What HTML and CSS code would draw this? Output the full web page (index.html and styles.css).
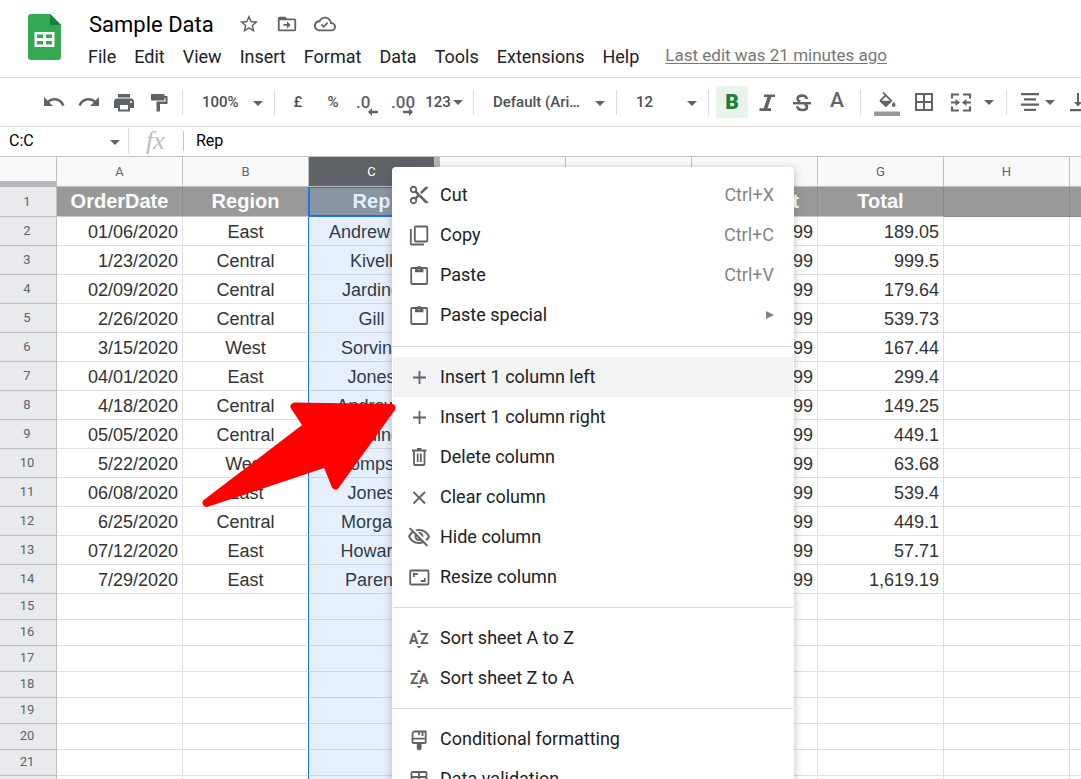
FILE: index.html
```
<!DOCTYPE html>
<html lang="en">
<head>
<meta charset="utf-8">
<title>Sample Data</title>
<link rel="stylesheet" href="styles.css">
</head>
<body>
<header class="header">
  <svg class="logo" viewBox="0 0 34 48" aria-hidden="true">
    <path fill="#34a853" d="M3 1h19l11 11v32a3 3 0 0 1-3 3H3a3 3 0 0 1-3-3V4a3 3 0 0 1 3-3z"/>
    <path fill="#fff" d="M22 0h12v12z"/>
    <path fill="#188038" d="M22 1l11 11H22z"/>
    <path fill="#fff" fill-rule="evenodd" d="M6.500 19h20v15h-20zM9 21.500v3.500h6v-3.500zM18 21.500v3.500h6v-3.500zM9 28v3.500h6V28zM18 28v3.500h6V28z"/>
  </svg>
  <div class="heading">
    <div class="title-row">
      <h1 class="title">Sample Data</h1>
      <button class="plain" aria-label="Star"><svg class="icon" viewBox="0 0 24 24"><path d="M22 9.240l-7.190-.620L12 2 9.190 8.630 2 9.240l5.460 4.730L5.820 21 12 17.270 18.180 21l-1.630-7.030L22 9.240zM12 15.400l-3.760 2.270 1-4.280-3.320-2.880 4.380-.380L12 6.100l1.710 4.040 4.380.380-3.320 2.880 1 4.280L12 15.400z"/></svg></button>
      <button class="plain" aria-label="Move"><svg class="icon" viewBox="0 0 24 24"><path d="M20 6h-8l-2-2H4c-1.100 0-2 .900-2 2v12c0 1.100.900 2 2 2h16c1.100 0 2-.900 2-2V8c0-1.100-.900-2-2-2zm0 12H4V8h16v10zm-8-1l4-4-4-4v3H8v2h4z"/></svg></button>
      <button class="plain" aria-label="Document status"><svg class="icon" viewBox="0 0 24 24"><path d="M19.350 10.040C18.670 6.590 15.640 4 12 4 9.110 4 6.610 5.640 5.360 8.040 2.350 8.360 0 10.900 0 14c0 3.310 2.690 6 6 6h13c2.760 0 5-2.240 5-5 0-2.640-2.050-4.780-4.650-4.960zM19 18H6c-2.210 0-4-1.790-4-4s1.790-4 4-4h.710C7.370 7.690 9.480 6 12 6c3.040 0 5.500 2.460 5.500 5.500v.500H19c1.660 0 3 1.340 3 3s-1.340 3-3 3zM10.600 13.500l-1.800-1.800-1.400 1.400 3.200 3.200 5-5-1.400-1.400z"/></svg></button>
    </div>
    <nav class="menubar">
      <button class="menu">File</button><button class="menu">Edit</button><button class="menu">View</button><button class="menu">Insert</button><button class="menu">Format</button><button class="menu">Data</button><button class="menu">Tools</button><button class="menu">Extensions</button><button class="menu">Help</button>
      <a class="last-edit" href="#">Last edit was 21 minutes ago</a>
    </nav>
  </div>
</header>

<div class="toolbar" role="toolbar">
  <button class="tool" aria-label="Undo"><svg class="icon24" viewBox="0 0 24 24"><path d="M12.500 8c-2.650 0-5.050.990-6.900 2.600L2 7v9h9l-3.620-3.620c1.390-1.160 3.160-1.880 5.120-1.880 3.540 0 6.550 2.310 7.600 5.500l2.370-.780C21.080 11.030 17.150 8 12.500 8z"/></svg></button>
  <button class="tool" aria-label="Redo"><svg class="icon24" viewBox="0 0 24 24"><path d="M18.400 10.600C16.550 8.990 14.150 8 11.500 8c-4.650 0-8.580 3.030-9.960 7.220L3.900 16c1.050-3.190 4.050-5.500 7.600-5.500 1.950 0 3.730.720 5.120 1.880L13 16h9V7l-3.600 3.600z"/></svg></button>
  <button class="tool" aria-label="Print"><svg class="icon24" viewBox="0 0 24 24"><path d="M19 8.500H5c-1.660 0-3 1.340-3 3V18h4v3.500h12V18h4v-6.500c0-1.660-1.340-3-3-3zM16 19.500H8V15h8v4.500zm3-6.500c-.550 0-1-.450-1-1s.450-1 1-1 1 .450 1 1-.450 1-1 1zM18 4H6v3.500h12z"/></svg></button>
  <button class="tool" aria-label="Paint format"><svg class="icon24" viewBox="0 0 24 24"><path d="M5 4h11.500c.600 0 1 .400 1 1v1H20.500v8h-7.500v7.500H9.500v-10h9V8h-1v1.500c0 .600-.400 1-1 1H5c-.600 0-1-.400-1-1V5c0-.600.400-1 1-1z"/></svg></button>
  <span class="sep"></span>
  <label class="pick pick-zoom"><select aria-label="Zoom"><option>100%</option></select><svg class="caret" viewBox="0 0 10 5"><path d="M0 0h10L5 5z"/></svg></label>
  <span class="sep"></span>
  <button class="tool">£</button>
  <button class="tool">%</button>
  <button class="tool decimal" aria-label="Decrease decimal places">.0<svg class="shift" viewBox="0 0 10 8"><path d="M4 0v2.800h6v2.400H4V8L0 4z"/></svg></button>
  <button class="tool decimal" aria-label="Increase decimal places">.00<svg class="shift" viewBox="0 0 10 8"><path d="M6 0v2.800H0v2.400h6V8l4-4z"/></svg></button>
  <button class="tool tool-number">123<svg class="arrow" viewBox="0 0 10 5"><path d="M0 0h10L5 5z"/></svg></button>
  <span class="sep"></span>
  <label class="pick pick-font"><select aria-label="Font"><option>Default (Ari…</option></select><svg class="caret" viewBox="0 0 10 5"><path d="M0 0h10L5 5z"/></svg></label>
  <span class="sep"></span>
  <label class="pick pick-zoom"><select aria-label="Font size"><option>12</option></select><svg class="caret" viewBox="0 0 10 5"><path d="M0 0h10L5 5z"/></svg></label>
  <span class="sep"></span>
  <button class="tool letter active" aria-pressed="true">B</button>
  <button class="tool" aria-label="Italic"><svg class="icon24" viewBox="0 0 24 24"><path d="M9 4.500h11v2.600h-3.700l-3.800 11.200H16v2.600H4.500v-2.600h4.200l3.800-11.200H9z"/></svg></button>
  <button class="tool" aria-label="Strikethrough"><svg class="icon24" viewBox="0 0 24 24"><path fill="none" stroke="#5f6368" stroke-width="2.600" d="M16.700 9c0-2-1.700-3.400-4.500-3.400-2.700 0-4.600 1.200-4.600 3.200 0 1.400 1 2.300 2.600 2.900M14.500 14.300c1.700.500 2.500 1.300 2.500 2.600 0 2-2 3.100-4.700 3.100-2.900 0-4.900-1.300-4.900-3.700"/><path d="M3 12h18v2.400H3z"/></svg></button>
  <button class="tool letter color">A</button>
  <span class="sep"></span>
  <button class="tool tool-fill" aria-label="Fill color"><svg class="fill-icon" viewBox="0 0 26 28"><path transform="translate(3 4) scale(.88)" d="M16.560 8.940L7.620 0 6.210 1.410l2.380 2.380-5.150 5.150c-.590.590-.590 1.540 0 2.120l5.500 5.500c.290.290.680.440 1.060.440s.770-.150 1.060-.440l5.500-5.500c.590-.580.590-1.530 0-2.120zM5.210 10L10 5.210 14.790 10H5.210zM19 11.500s-2 2.170-2 3.500c0 1.100.900 2 2 2s2-.900 2-2c0-1.330-2-3.500-2-3.500z"/><path fill="#999" d="M0 23.500h26V28H0z"/></svg></button>
  <button class="tool" aria-label="Borders"><svg class="icon24" viewBox="0 0 24 24"><path d="M3 3v18h18V3H3zm8 16H5v-6h6v6zm0-8H5V5h6v6zm8 8h-6v-6h6v6zm0-8h-6V5h6v6z"/></svg></button>
  <button class="tool tool-merge" aria-label="Merge cells"><svg class="icon24" viewBox="0 0 24 24"><path fill="none" stroke="#5f6368" stroke-width="2.200" d="M3 8.500V4.500h7M21 8.500V4.500h-7M3 16.500v4h7M21 16.500v4h-7M2 12.500h5M22 12.500h-5"/><path d="M6.500 9l4.500 3.500L6.500 16zM17.500 9L13 12.500l4.500 3.500z"/></svg><svg class="arrow" viewBox="0 0 10 5"><path d="M0 0h10L5 5z"/></svg></button>
  <span class="sep"></span>
  <button class="tool tool-align" aria-label="Horizontal align"><svg class="icon24" viewBox="0 0 24 24"><path d="M3 3h18v2.200H3zM6 8.300h12v2.200H6zM3 13.500h18v2.200H3zM6 18.800h12V21H6z"/></svg><svg class="arrow" viewBox="0 0 10 5"><path d="M0 0h10L5 5z"/></svg></button>
  <button class="tool" aria-label="Vertical align"><svg class="icon24" viewBox="0 0 24 24"><path d="M16 12h-3V3h-2v9H8l4 4.500zM4 19v2.200h16V19z"/></svg></button>
</div>

<div class="formula">
  <label class="name-box"><input aria-label="Name box" value="C:C"><svg class="caret" viewBox="0 0 10 5"><path d="M0 0h10L5 5z"/></svg></label>
  <span class="fx">fx</span>
  <input class="formula-input" aria-label="Formula" value="Rep">
</div>

<main class="sheet">
<table class="grid">
  <colgroup><col class="c-row"><col class="c"><col class="c"><col class="c"><col class="c-freeze"><col class="c"><col class="c"><col class="c"><col class="c"><col class="c"><col class="c"></colgroup>
  <thead><tr><th class="corner"></th><th>A</th><th>B</th><th class="on">C</th><th class="freeze"></th><th>D</th><th>E</th><th>F</th><th>G</th><th>H</th><th></th></tr></thead>
  <tbody>
  <tr class="top"><th>1</th><td>OrderDate</td><td>Region</td><td>Rep</td><td></td><td></td><td></td><td>Unit Cost</td><td>Total</td><td class="blank"></td><td class="blank"></td></tr>
  <tr><th>2</th><td>01/06/2020</td><td>East</td><td>Andrew Jo</td><td></td><td></td><td></td><td>1.99</td><td>189.05</td><td></td><td></td></tr>
  <tr><th>3</th><td>1/23/2020</td><td>Central</td><td>Kivell</td><td></td><td></td><td></td><td>19.99</td><td>999.5</td><td></td><td></td></tr>
  <tr><th>4</th><td>02/09/2020</td><td>Central</td><td>Jardine</td><td></td><td></td><td></td><td>4.99</td><td>179.64</td><td></td><td></td></tr>
  <tr><th>5</th><td>2/26/2020</td><td>Central</td><td>Gill</td><td></td><td></td><td></td><td>19.99</td><td>539.73</td><td></td><td></td></tr>
  <tr><th>6</th><td>3/15/2020</td><td>West</td><td>Sorvino</td><td></td><td></td><td></td><td>2.99</td><td>167.44</td><td></td><td></td></tr>
  <tr><th>7</th><td>04/01/2020</td><td>East</td><td>Jones</td><td></td><td></td><td></td><td>4.99</td><td>299.4</td><td></td><td></td></tr>
  <tr><th>8</th><td>4/18/2020</td><td>Central</td><td>Andrews</td><td></td><td></td><td></td><td>1.99</td><td>149.25</td><td></td><td></td></tr>
  <tr><th>9</th><td>05/05/2020</td><td>Central</td><td>Jardine</td><td></td><td></td><td></td><td>4.99</td><td>449.1</td><td></td><td></td></tr>
  <tr><th>10</th><td>5/22/2020</td><td>West</td><td>Thompson</td><td></td><td></td><td></td><td>1.99</td><td>63.68</td><td></td><td></td></tr>
  <tr><th>11</th><td>06/08/2020</td><td>East</td><td>Jones</td><td></td><td></td><td></td><td>8.99</td><td>539.4</td><td></td><td></td></tr>
  <tr><th>12</th><td>6/25/2020</td><td>Central</td><td>Morgan</td><td></td><td></td><td></td><td>4.99</td><td>449.1</td><td></td><td></td></tr>
  <tr><th>13</th><td>07/12/2020</td><td>East</td><td>Howard</td><td></td><td></td><td></td><td>1.99</td><td>57.71</td><td></td><td></td></tr>
  <tr><th>14</th><td>7/29/2020</td><td>East</td><td>Parent</td><td></td><td></td><td></td><td>19.99</td><td>1,619.19</td><td></td><td></td></tr>
  </tbody>
  <tbody class="short">
  <tr><th>15</th><td></td><td></td><td></td><td></td><td></td><td></td><td></td><td></td><td></td><td></td></tr>
  <tr><th>16</th><td></td><td></td><td></td><td></td><td></td><td></td><td></td><td></td><td></td><td></td></tr>
  <tr><th>17</th><td></td><td></td><td></td><td></td><td></td><td></td><td></td><td></td><td></td><td></td></tr>
  <tr><th>18</th><td></td><td></td><td></td><td></td><td></td><td></td><td></td><td></td><td></td><td></td></tr>
  <tr><th>19</th><td></td><td></td><td></td><td></td><td></td><td></td><td></td><td></td><td></td><td></td></tr>
  <tr><th>20</th><td></td><td></td><td></td><td></td><td></td><td></td><td></td><td></td><td></td><td></td></tr>
  <tr><th>21</th><td></td><td></td><td></td><td></td><td></td><td></td><td></td><td></td><td></td><td></td></tr>
  <tr><th></th><td></td><td></td><td></td><td></td><td></td><td></td><td></td><td></td><td></td><td></td></tr>
  </tbody>
</table>
</main>

<div class="context" role="menu">
  <div class="group">
    <button class="item" role="menuitem"><svg class="icon22" viewBox="0 0 24 24"><path d="M9.640 7.640c.230-.500.360-1.050.360-1.640 0-2.210-1.790-4-4-4S2 3.790 2 6s1.790 4 4 4c.590 0 1.140-.130 1.640-.360L10 12l-2.360 2.360C7.140 14.130 6.590 14 6 14c-2.210 0-4 1.790-4 4s1.790 4 4 4 4-1.790 4-4c0-.590-.130-1.140-.360-1.640L12 14l7 7h3v-1L9.640 7.640zM6 8c-1.100 0-2-.890-2-2s.900-2 2-2 2 .890 2 2-.900 2-2 2zm0 12c-1.100 0-2-.890-2-2s.900-2 2-2 2 .890 2 2-.900 2-2 2zm6-7.500c-.280 0-.500-.220-.500-.500s.220-.500.500-.500.500.220.500.500-.220.500-.500.500zM19 3l-6 6 2 2 7-7V3z"/></svg><span>Cut</span><kbd>Ctrl+X</kbd></button>
    <button class="item" role="menuitem"><svg class="icon24 line" viewBox="0 0 24 24"><rect x="7.800" y="3.500" width="12.500" height="15" rx="1"/><path d="M3.800 6v14.500a1 1 0 0 0 1 1H17"/></svg><span>Copy</span><kbd>Ctrl+C</kbd></button>
    <button class="item" role="menuitem"><svg class="icon24 line" viewBox="0 0 24 24"><rect x="4.200" y="5" width="16" height="16" rx="1"/><path class="solid" fill-rule="evenodd" d="M8 5h1.600a2.700 2.700 0 0 1 5.200 0H16.400v4.200H8zM12.200 4.400a1 1 0 1 0 .010 0z"/></svg><span>Paste</span><kbd>Ctrl+V</kbd></button>
    <button class="item" role="menuitem"><svg class="icon24 line" viewBox="0 0 24 24"><rect x="4.200" y="5" width="16" height="16" rx="1"/><path class="solid" fill-rule="evenodd" d="M8 5h1.600a2.700 2.700 0 0 1 5.200 0H16.400v4.200H8zM12.200 4.400a1 1 0 1 0 .010 0z"/></svg><span>Paste special</span><svg class="more" viewBox="0 0 8 8"><path d="M0 0l8 4-8 4z"/></svg></button>
  </div>
  <div class="group">
    <button class="item hover" role="menuitem"><svg class="icon24 line" viewBox="0 0 24 24"><path d="M12.500 6v13M6 12.500h13"/></svg><span>Insert 1 column left</span></button>
    <button class="item" role="menuitem"><svg class="icon24 line" viewBox="0 0 24 24"><path d="M12.500 6v13M6 12.500h13"/></svg><span>Insert 1 column right</span></button>
    <button class="item" role="menuitem"><svg class="icon24 line" viewBox="0 0 24 24"><path d="M5 5.500h14.500M10 4h4.500M7 6v13a1 1 0 0 0 1 1h8.500a1 1 0 0 0 1-1V6M10.700 8.500v8.500M13.800 8.500v8.500"/></svg><span>Delete column</span></button>
    <button class="item" role="menuitem"><svg class="icon24 line" viewBox="0 0 24 24"><path d="M6.500 7l11.500 11.500M18 7L6.500 18.500"/></svg><span>Clear column</span></button>
    <button class="item" role="menuitem"><svg class="icon24" viewBox="0 0 24 24"><path d="M12 6c3.790 0 7.170 2.130 8.820 5.500-.590 1.220-1.420 2.270-2.410 3.120l1.410 1.410c1.390-1.230 2.490-2.770 3.180-4.530C21.270 7.110 17 4 12 4c-1.270 0-2.490.200-3.640.570l1.650 1.650C10.660 6.090 11.320 6 12 6zm-1.070 1.140L13 9.210c.570.250 1.030.710 1.280 1.280l2.070 2.070c.080-.340.140-.700.140-1.070C16.500 9.010 14.480 7 12 7c-.370 0-.720.050-1.070.140zM2.010 3.870l2.680 2.680C3.060 7.830 1.770 9.530 1 11.500 2.730 15.890 7 19 12 19c1.520 0 2.980-.290 4.320-.820l3.420 3.420 1.410-1.410L3.420 2.450 2.010 3.870zm7.500 7.500l2.610 2.610c-.040.010-.080.020-.120.020-1.380 0-2.500-1.120-2.500-2.500 0-.050.010-.080.010-.130zm-3.400-3.400l1.750 1.750c-.230.550-.360 1.150-.360 1.780 0 2.480 2.020 4.500 4.500 4.500.630 0 1.230-.130 1.770-.360l.980.980c-.880.240-1.800.380-2.750.380-3.790 0-7.170-2.130-8.820-5.500.700-1.430 1.720-2.610 2.930-3.530z"/></svg><span>Hide column</span></button>
    <button class="item" role="menuitem"><svg class="icon24 line" viewBox="0 0 24 24"><rect x="3.200" y="5.500" width="18.300" height="14" rx="1"/><path d="M6.800 12V9h4M17.800 13v3h-4"/></svg><span>Resize column</span></button>
  </div>
  <div class="group">
    <button class="item" role="menuitem"><svg class="icon24" viewBox="0 0 24 24"><text class="az" x="2" y="18">A</text><text class="az" x="13" y="18">Z</text><path d="M9.500 6L12 3.500 14.500 6zM9.500 20h5L12 22.500z"/></svg><span>Sort sheet A to Z</span></button>
    <button class="item" role="menuitem"><svg class="icon24" viewBox="0 0 24 24"><text class="az" x="3" y="18">Z</text><text class="az" x="12" y="18">A</text><path d="M9.500 6L12 3.500 14.500 6zM9.500 20h5L12 22.500z"/></svg><span>Sort sheet Z to A</span></button>
  </div>
  <div class="group">
    <button class="item" role="menuitem"><svg class="icon24 line" viewBox="0 0 24 24"><path d="M5.500 15V7a2.500 2.500 0 0 1 2.500-2.500h10.700V15a1 1 0 0 1-1 1H6.500a1 1 0 0 1-1-1zM5.500 11.700h13M12 5v3M15.500 5v4"/><path class="solid" d="M9.800 16h4.800v5a2.400 2.400 0 0 1-4.800 0z"/></svg><span>Conditional formatting</span></button>
    <button class="item" role="menuitem"><svg class="icon24 line" viewBox="0 0 24 24"><rect x="4.500" y="5" width="15" height="15" rx="1"/><path d="M5 10h14M12 5v14M5 15h14"/></svg><span>Data validation</span></button>
  </div>
</div>

<svg class="pointer" viewBox="0 0 200 110" aria-hidden="true"><path d="M94.500 8.500L191.500 10 135.500 87.500 126.500 65 6.500 105 107.500 28z"/></svg>
</body>
</html>
```
FILE: styles.css
```
* { box-sizing: border-box; }

body {
  position: relative;
  display: flex;
  flex-direction: column;
  height: 100vh;
  margin: 0;
  overflow: hidden;
  background: #fff;
  color: #202124;
  font-family: Roboto, "Liberation Sans", sans-serif;
  font-size: 18px;
}

button, input, select {
  margin: 0;
  padding: 0;
  border: 0;
  background: none;
  color: inherit;
  font: inherit;
}

svg { display: block; flex: none; fill: #5f6368; }

.header {
  display: flex;
  flex: none;
  gap: 18px;
  height: 78px;
  padding: 13px 0 0 28px;
  border-bottom: 1px solid #dadce0;
}
.logo { width: 34px; height: 48px; }
.heading { display: flex; flex-direction: column; margin-top: -4px; }
.title-row { display: flex; align-items: center; gap: 16px; height: 30px; padding-left: 9px; }
.title { margin: 0 8px 0 0; color: #000; font-size: 22px; font-weight: 400; }
.icon { width: 22px; height: 22px; }
.menubar { display: flex; align-items: center; height: 34px; margin-left: -1px; white-space: nowrap; }
.menu { padding: 0 9px; }
.last-edit { margin-left: 17px; padding-bottom: 2px; color: #777; font-size: 17px; text-underline-offset: 2px; }

.toolbar {
  display: flex;
  flex: none;
  align-items: center;
  gap: 3px;
  height: 49px;
  padding-left: 38px;
  border-bottom: 1px solid #dadce0;
  color: #4d4f52;
  font-size: 15px;
  font-weight: 500;
}
.tool {
  position: relative;
  display: flex;
  flex: none;
  align-items: center;
  justify-content: center;
  width: 32px;
  height: 32px;
  border-radius: 2px;
}
.icon24 { width: 24px; height: 24px; }
.icon22 { width: 22px; height: 22px; margin: 0 1px; }
.sep { flex: none; width: 1px; height: 25px; margin: 0 4px; background: #dadce0; }
.arrow { width: 10px; height: 5px; }
.pick { position: relative; flex: none; }
.pick select { width: 100%; height: 32px; padding-left: 12px; appearance: none; }
.pick-zoom { width: 77px; }
.pick-font { width: 128px; }
.caret { position: absolute; top: 50%; right: 4px; width: 10px; height: 5px; margin-top: -1px; }
.decimal { justify-content: flex-start; padding-left: 4px; color: #5f6368; font-size: 17px; }
.shift { position: absolute; left: 16px; bottom: 2px; width: 10px; height: 8px; }
.tool-number { gap: 2px; width: 44px; }
.letter { color: #5f6368; font-size: 21px; }
.active { background: #e6f4ea; color: #188038; font-weight: 900; }
.color { padding-bottom: 5px; }
.tool-fill { width: 37px; }
.fill-icon { width: 26px; height: 28px; }
.tool-merge { gap: 11px; width: 56px; }
.tool-align { gap: 3px; width: 45px; justify-content: flex-start; padding-left: 4px; }

.formula {
  display: flex;
  flex: none;
  align-items: center;
  height: 30px;
  padding-bottom: 2px;
  border-bottom: 1px solid #c0c0c0;
  color: #000;
  font-size: 16px;
}
.name-box { position: relative; width: 129px; height: 26px; border-right: 1px solid #dadce0; }
.name-box input { width: 100px; height: 26px; padding-left: 9px; }
.name-box .caret { right: 8px; }
.fx {
  width: 55px;
  padding-right: 1px;
  border-right: 1px solid #c8c8c8;
  color: #bdbdbd;
  font: italic 26px/20px "Liberation Serif", serif;
  text-align: center;
}
.formula-input { flex: 1; height: 26px; padding-left: 12px; }

.sheet { flex: 1; min-height: 0; overflow: hidden; }
.grid { width: max-content; table-layout: fixed; border-spacing: 0; }
.c-row { width: 57px; }
.c { width: 126px; }
.c-freeze { width: 5px; }
.grid th, .grid td { overflow: hidden; padding: 0; white-space: nowrap; }
.grid th {
  border-right: 1px solid #c0c0c0;
  border-bottom: 1px solid #c0c0c0;
  background: #f8f9fa;
  color: #5f6368;
  font-size: 13px;
  font-weight: 400;
}
.grid thead th { height: 30px; }
.grid thead .corner { border-bottom: 6px solid #b7b7b7; }
.grid thead .on { border-color: #b7b7b7; background: #5f6368; color: #fff; }
.grid thead .freeze { border-right: 0; background: #b7b7b7; }
.grid tbody th { padding: 0 2px 1px 0; background: #e8eaed; }
.grid td {
  height: 29px;
  padding-top: 2px;
  border-right: 1px solid #e0e0e0;
  border-bottom: 1px solid #e0e0e0;
  color: #333;
  font-family: "Liberation Sans", sans-serif;
  font-size: 18px;
  line-height: 20px;
  text-align: center;
}
.grid td:nth-child(2), .grid td:nth-child(8), .grid td:nth-child(9) { padding-right: 4px; text-align: right; }
.grid td:nth-child(3) { border-right-color: #1a73e8; }
.grid td:nth-child(4) { border-color: #cbd5e2; background: #e6f0fd; color: #303b4a; }
.grid .top td {
  height: 30px;
  padding: 0 0 1px;
  border-right-color: #8a8a8a;
  border-bottom-color: #ccc;
  background: #999;
  color: #fff;
  font-size: 20px;
  font-weight: 700;
  text-align: center;
}
.grid .top td:nth-child(3) { border-right-color: #1a73e8; }
.grid .top td:nth-child(4) { border-bottom-color: #1a73e8; background: #8a94a2; box-shadow: inset 1px 1px #1a73e8, inset 0 -1px #1a73e8; color: #e6f0fd; }
.grid .top .blank { border-bottom-color: #8a8a8a; }
.grid .short td { height: 26px; }
.grid .short th { padding-bottom: 2px; }

.context {
  position: absolute;
  top: 167px;
  left: 392px;
  width: 402px;
  padding: 0 1px;
  border-radius: 4px;
  background: #fff;
  box-shadow: 0 2px 7px 2px rgba(60, 64, 67, .22);
}
.group { padding: 10px 0; }
.group:first-child { padding: 8px 0 11px; }
.group + .group { border-top: 1px solid #dadce0; }
.item {
  display: flex;
  align-items: center;
  gap: 9px;
  width: 100%;
  height: 40px;
  padding: 0 19px 0 14px;
  text-align: left;
}
.item span { flex: 1; padding-bottom: 2px; }
.item kbd { padding-bottom: 2px; color: #80868b; font: inherit; }
.hover { background: #f1f3f4; }
.line { fill: none; stroke: #5f6368; stroke-width: 1.8; }
.solid { fill: #5f6368; stroke: none; }
.more { width: 8px; height: 8px; fill: #80868b; }
.az { font-size: 14px; font-weight: 700; }

.pointer { position: absolute; top: 398px; left: 200px; width: 200px; height: 110px; pointer-events: none; }
.pointer path { fill: #f00; stroke: #f00; stroke-width: 8; stroke-linejoin: round; }
```
